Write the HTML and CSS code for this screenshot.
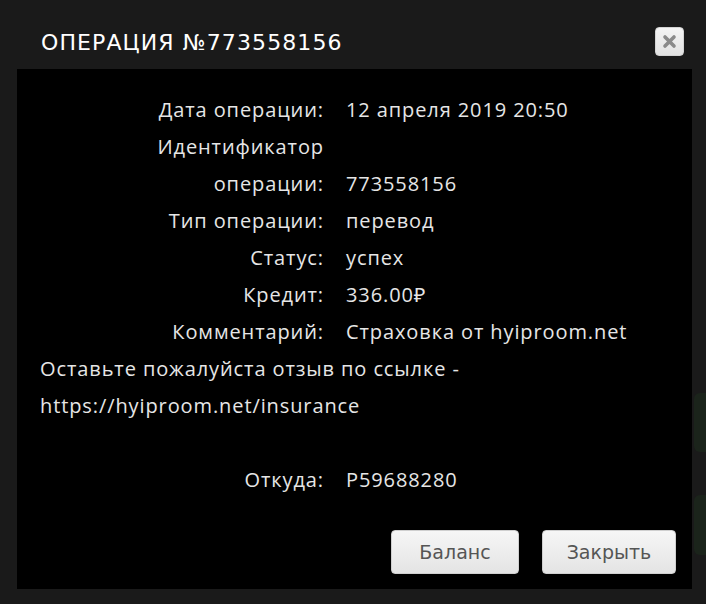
FILE: index.html
```html
<!DOCTYPE html>
<html lang="ru">
<head>
<meta charset="utf-8">
<title>Операция</title>
<link rel="stylesheet" href="styles.css">
</head>
<body>
<div class="page">
  <div class="bg-tile tile-1"></div>
  <div class="bg-tile tile-2"></div>
</div>
<div class="modal">
  <div class="modal-head">
    <h1 class="modal-title">ОПЕРАЦИЯ №773558156</h1>
    <button class="close-btn" aria-label="Закрыть">
      <svg width="15" height="15" viewBox="0 0 15 15"><path d="M3 3 L12 12 M12 3 L3 12" stroke="#8a8a8a" stroke-width="3.6" stroke-linecap="round"/></svg>
    </button>
  </div>
  <div class="modal-body">
    <div class="details">
      <div class="label">Дата операции:</div><div class="value">12 апреля 2019 20:50</div>
      <div class="label">Идентификатор<br>операции:</div><div class="value value-bottom">773558156</div>
      <div class="label">Тип операции:</div><div class="value">перевод</div>
      <div class="label">Статус:</div><div class="value">успех</div>
      <div class="label">Кредит:</div><div class="value">336.00₽</div>
      <div class="label">Комментарий:</div><div class="value">Страховка от hyiproom.net</div>
      <div class="full">Оставьте пожалуйста отзыв по ссылке -<br>https://hyiproom.net/insurance</div>
      <div class="full empty"></div>
      <div class="label">Откуда:</div><div class="value">P59688280</div>
    </div>
    <div class="actions">
      <button class="btn">Баланс</button>
      <button class="btn">Закрыть</button>
    </div>
  </div>
</div>
</body>
</html>
```
FILE: styles.css
```css
* { box-sizing: border-box; }
html, body { margin: 0; padding: 0; }
body {
  width: 706px;
  height: 604px;
  background: #1a1a1a;
  overflow: hidden;
  position: relative;
  font-family: "Open Sans", "Noto Sans", sans-serif;
}
.page { width: 706px; height: 604px; position: relative; }
.bg-tile {
  position: absolute;
  left: 694px;
  width: 20px;
  background: #1b241b;
  border-radius: 6px;
}
.tile-1 { top: 393px; height: 59px; }
.tile-2 { top: 495px; height: 60px; }

.modal {
  position: absolute;
  left: 0;
  top: 0;
  width: 706px;
  height: 604px;
  padding: 0 14px 15px 17px;
  display: flex;
  flex-direction: column;
}
.modal-head {
  height: 69px;
  display: flex;
  align-items: center;
  justify-content: space-between;
  padding: 0 8px 0 24px;
}
.modal-title {
  margin: 17px 0 0 0;
  color: #fff;
  font-family: "DejaVu Sans", sans-serif;
  font-weight: normal;
  font-size: 22px;
  letter-spacing: 1.1px;
  line-height: 26px;
}
.close-btn {
  width: 29px;
  height: 29px;
  padding: 0;
  border: 1px solid #d4d4d4;
  border-radius: 4px;
  background: linear-gradient(#f4f4f4, #e2e2e2);
  display: flex;
  align-items: center;
  justify-content: center;
  margin-top: 14px;
}
.modal-body {
  flex: 1;
  background: #000;
  padding: 22px 16px 15px 23px;
  display: flex;
  flex-direction: column;
  justify-content: space-between;
}
.details {
  display: grid;
  grid-template-columns: 284px 1fr;
  column-gap: 22px;
  color: #e6e6e6;
  font-size: 20px;
  letter-spacing: 0.9px;
  line-height: 37px;
}
.label { text-align: right; }
.value-bottom { align-self: end; }
.full { grid-column: 1 / 3; }
.empty { height: 37px; }
.actions {
  display: flex;
  justify-content: flex-end;
  gap: 23px;
}
.btn {
  height: 44px;
  padding: 0;
  border: 1px solid #cfcfcf;
  border-radius: 4px;
  background: linear-gradient(#f6f6f6, #e4e4e4);
  color: #555;
  font-family: "DejaVu Sans", sans-serif;
  font-size: 19px;
}
.btn:first-child { width: 128px; }
.btn:last-child { width: 134px; }
```
